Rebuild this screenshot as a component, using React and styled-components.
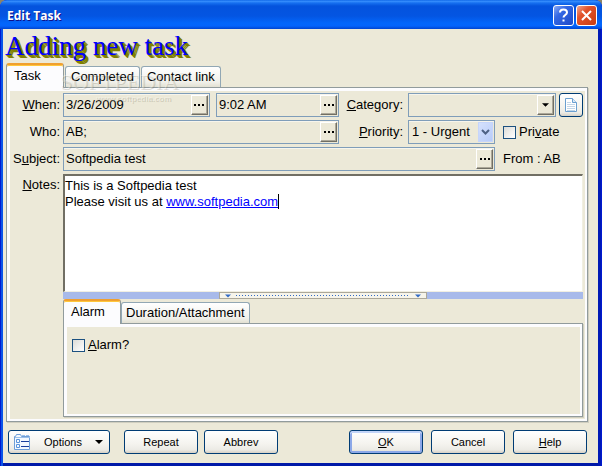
import { useState } from "react";
import styled, { createGlobalStyle, css } from "styled-components";

const GlobalStyle = createGlobalStyle`
  :root {
    --color-face: #ece9d8;
    --color-field: #7f9db9;
    --color-tab: #919b9c;
    --color-navy: #003c74;
  }
  * {
    box-sizing: border-box;
  }
  body {
    margin: 0;
    background: #8a8468;
    color: #000;
    font-family: "Liberation Sans", Arial, sans-serif;
    font-size: 13px;
    line-height: 16px;
  }
  input, select, button {
    font: inherit;
    color: inherit;
  }
`;

const Window = styled.main`
  display: flex;
  flex-direction: column;
  min-height: 100vh;
  border-radius: 7px 7px 0 0;
  overflow: hidden;
  background: var(--color-face);
  box-shadow: inset 0 0 0 1px #0019cf, inset 3px 0 #0a54e8, inset -4px 0 #0019b5,
    inset 0 -4px #0019a8;
`;

const TitleBar = styled.header`
  display: flex;
  align-items: center;
  gap: 2px;
  height: 29px;
  padding: 1px 5px 0 7px;
  background: linear-gradient(
    #0058e0 0,
    #3b93ff 1px,
    #1670f0 3px,
    #0453dd 6px,
    #0455e2 16px,
    #0366fb 23px,
    #0464fc 26px,
    #0144d0 29px
  );
`;

const WindowTitle = styled.h1`
  flex: 1;
  margin: 0;
  padding-top: 2px;
  color: #fff;
  font: bold 12px/16px "Open Sans", "Noto Sans", sans-serif;
  text-shadow: 1px 1px #0f1089;
`;

const CaptionButton = styled.button`
  display: grid;
  place-items: center;
  width: 21px;
  height: 21px;
  padding: 0;
  border: 1px solid #fff;
  border-radius: 3px;
  background: ${(props) =>
    props.$close
      ? "linear-gradient(135deg, #f0a68e, #e2532c 35%, #c93c10)"
      : "linear-gradient(135deg, #8aabf5, #3368e4 35%, #1c48c8)"};
`;

const Content = styled.div`
  display: flex;
  flex: 1;
  flex-direction: column;
  padding: 3px 14px 13px 6px;
`;

const Heading = styled.h2`
  margin: 0 0 0 -1px;
  color: #00f;
  font: 27px/28px "Liberation Serif", "Times New Roman", serif;
  text-shadow: 1px 1px #808000, 2px 2px #808000, 3px 3px #808000;
`;

const TabList = styled.div`
  position: relative;
  display: flex;
  align-items: flex-end;
  gap: ${(props) => props.$gap};
  height: 24px;
  margin-top: ${(props) => props.$top};
`;

const Tab = styled.button`
  height: 21px;
  padding: ${(props) => props.$pad};
  border: 1px solid #91a7b4;
  border-bottom: none;
  border-radius: 3px 3px 0 0;
  background: linear-gradient(#fff, #f0f0ea 75%, #e2e0d2);
  white-space: nowrap;

  ${(props) =>
    props.$active &&
    css`
      position: relative;
      height: 25px;
      width: 58px;
      margin-bottom: -1px;
      padding: 0 10px 2px 7px;
      border-color: var(--color-tab);
      border-top: 2px solid #f0a030;
      background: #fcfcfe;
      box-shadow: inset 0 1px #ffc73c;
      text-align: left;
    `}
`;

const TabPanel = styled.section`
  display: flex;
  flex: ${(props) => (props.$fill ? 1 : "none")};
  flex-direction: column;
  min-height: 94px;
  padding: ${(props) => props.$pad};
  border: 1px solid var(--color-tab);
  box-shadow: inset 3px 3px #fcfcfe, inset -2px -2px #fcfcfe, 1px 1px #d0cebf;
`;

const Watermark = styled.div`
  position: absolute;
  z-index: 1;
  left: 54px;
  top: 8px;
  color: rgba(255, 255, 255, 0.3);
  font: 22px/22px "Liberation Serif", serif;
  text-shadow: 1px 1px rgba(120, 115, 90, 0.25);
  pointer-events: none;

  small {
    font-size: 10px;
    line-height: 10px;
    vertical-align: top;
  }
`;

const WatermarkSite = styled.div`
  margin-left: 36px;
  font: bold 8px/12px "Liberation Sans", sans-serif;
`;

const Form = styled.div`
  display: grid;
  grid-template-columns: 53px 1fr 69px 87px 88px;
  grid-auto-rows: 24px;
  row-gap: 3px;
  align-items: center;
`;

const Label = styled.label`
  padding-right: ${(props) => (props.$wide ? "5px" : "3px")};
  text-align: right;
  white-space: nowrap;
`;

const Group = styled.div`
  display: flex;
  align-items: center;
  gap: ${(props) => props.$gap};
  grid-column: ${(props) => props.$span && `span ${props.$span}`};
  min-width: 0;
`;

const Field = styled.div`
  position: relative;
  display: flex;
  flex: ${(props) => props.$grow || 1} 1 0;
  min-width: 0;
  height: 24px;
  padding: 1px;
  border: 1px solid var(--color-field);
  box-shadow: inset 0 1px #f7f5ec;
`;

const TextInput = styled.input`
  flex: 1;
  min-width: 0;
  padding: 0 1px 1px;
  border: none;
  outline: none;
  background: none;
`;

const bevel = css`
  width: 17px;
  height: 20px;
  padding: 0;
  border: 1px solid;
  border-color: #fff #716f64 #716f64 #fff;
  background: var(--color-face);
  box-shadow: inset -1px -1px #aca899;
`;

const MoreButton = styled.button`
  ${bevel}
  display: grid;
  place-items: center;
`;

const Select = styled.select`
  flex: 1;
  min-width: 0;
  padding: 0 0 0 2px;
  border: none;
  outline: none;
  background: none;
  appearance: none;
`;

const DropArrow = styled.span`
  ${bevel}
  position: absolute;
  top: 1px;
  right: 1px;
  display: grid;
  place-items: center;
  pointer-events: none;

  ${(props) =>
    props.$blue &&
    css`
      width: 15px;
      border-color: #c6d5fb;
      background: linear-gradient(135deg, #d5e1fd, #b7cbf9);
      box-shadow: none;
    `}
`;

const xpButton = css`
  display: flex;
  align-items: center;
  justify-content: center;
  height: 24px;
  padding: 0;
  border: 1px solid var(--color-navy);
  border-radius: 3px;
  background: linear-gradient(#fff, #f4f3ee 60%, #ecebe5 85%, #d6d0c5);
`;

const PageButton = styled.button`
  ${xpButton}
  width: 24px;
`;

const CheckLabel = styled.label`
  display: flex;
  align-items: center;
  gap: 3px;
  padding-left: ${(props) => props.$pad};
`;

const Checkbox = styled.input`
  width: 13px;
  height: 13px;
  margin: 0;
  border: 1px solid #1c5180;
  background: linear-gradient(135deg, #dcdcd7, #fff);
  appearance: none;

  &:checked {
    box-shadow: inset 0 0 0 3px #fff;
    background: #21a121;
  }
`;

const From = styled.span`
  padding-left: 8px;
  white-space: nowrap;
`;

const NotesRow = styled.div`
  display: grid;
  flex: 1;
  grid-template-columns: 53px 1fr;
  margin-top: 3px;
`;

const NotesLabel = styled(Label)`
  padding-top: 3px;
`;

const NotesColumn = styled.div`
  display: flex;
  flex-direction: column;
  min-width: 0;
`;

const Notes = styled.div`
  flex: 1;
  min-height: 118px;
  padding: 2px 0;
  border: 2px solid;
  border-width: 2px 1px 1px 2px;
  border-color: #716f64 #f1efe2 #f1efe2 #716f64;
  outline: none;
  background: #fff;

  p {
    margin: 0;
  }
  a {
    color: #00f;
  }
`;

const Caret = styled.span`
  display: inline-block;
  width: 1px;
  height: 15px;
  background: #000;
  vertical-align: top;
`;

const Splitter = styled.div`
  display: flex;
  justify-content: center;
  height: 7px;
  background: #a8baea;
`;

const Grip = styled.div`
  display: flex;
  align-items: center;
  gap: 5px;
  width: 40%;
  padding: 0 5px;
  border: 1px solid #aca899;
  background: #f6f4ea;

  svg {
    flex: none;
  }
`;

const Dots = styled.div`
  flex: 1;
  height: 1px;
  background: repeating-linear-gradient(
    90deg,
    #316ac5 0 1px,
    transparent 1px 3px
  );
`;

const Footer = styled.footer`
  display: flex;
  justify-content: space-between;
  margin-top: 8px;
  padding: 0 1px 0 2px;
  font-size: 11px;
`;

const ButtonGroup = styled.div`
  display: flex;
  gap: ${(props) => props.$gap};
`;

const Button = styled.button`
  ${xpButton}
  width: 74px;
  box-shadow: ${(props) =>
    props.$default && "inset 0 2px #c2d4f8, inset 0 0 0 2px #8ca8e8"};
`;

const OptionsButton = styled(Button)`
  justify-content: space-between;
  width: 102px;
  margin-right: 8px;
  padding: 0 6px 0 5px;
`;

function Ellipsis() {
  return (
    <svg width="10" height="2" viewBox="0 0 10 2" shapeRendering="crispEdges">
      <path d="M0 0h2v2H0zM4 0h2v2H4zM8 0h2v2H8z" />
    </svg>
  );
}

function Triangle({ width = 7, color = "#000" }) {
  return (
    <svg width={width} height="4" viewBox="0 0 8 4">
      <path d="M0 0h8L4 4z" fill={color} />
    </svg>
  );
}

function PageIcon() {
  return (
    <svg width="14" height="16" viewBox="0 0 14 16" fill="none">
      <path d="M1.5 1.5h7l4 4v9h-11z" fill="#fff" stroke="#6a9fd0" />
      <path d="M8.5 1.5v4h4" fill="#dbe9f7" stroke="#6a9fd0" />
      <path d="M3 5.5h4M3 7.5h8M3 9.5h8M3 11.5h8M3 13.5h8" stroke="#c3d6e8" />
    </svg>
  );
}

function OptionsIcon() {
  return (
    <svg width="17" height="16" viewBox="0 0 17 16" fill="none">
      <path
        d="M.5 15.500v-13h1l1-2h4l1 2h8v13z"
        fill="#f4f9ff"
        stroke="#6f9fd8"
      />
      <path d="M8 1.500h3M12 1.500h3M1 3.500h15" stroke="#9cc0ea" />
      <path d="M2.5 5.500h3v3h-3zM2.5 10.500h3v3h-3z" stroke="#5a94da" />
      <path d="M7 7.500h8M7 12.500h8" stroke="#1a3f9c" />
    </svg>
  );
}

function PickField({ id, label, value, grow }) {
  return (
    <Field $grow={grow}>
      <TextInput id={id} aria-label={label} defaultValue={value} />
      <MoreButton type="button" aria-label={`Choose ${label}`}>
        <Ellipsis />
      </MoreButton>
    </Field>
  );
}

function App() {
  const [tab, setTab] = useState("Task");
  const [subTab, setSubTab] = useState("Alarm");

  return (
    <>
      <GlobalStyle />
      <Window>
        <TitleBar>
          <WindowTitle>Edit Task</WindowTitle>
          <CaptionButton aria-label="Help">
            <svg width="13" height="15" viewBox="0 0 13 15" fill="none">
              <path
                d="M3 4.5C3 2.500 4.500 1.500 6.500 1.500s3.500 1 3.500 3c0 2.500-3.500 2.500-3.500 5"
                stroke="#fff"
                strokeWidth="2"
              />
              <path d="M5.500 11.500h2v2h-2z" fill="#fff" />
            </svg>
          </CaptionButton>
          <CaptionButton $close aria-label="Close">
            <svg width="13" height="13" viewBox="0 0 13 13">
              <path d="M2 2l9 9M11 2l-9 9" stroke="#fff" strokeWidth="2" />
            </svg>
          </CaptionButton>
        </TitleBar>

        <Content>
          <Heading>Adding new task</Heading>
          <TabList role="tablist" $top="3px" $gap="1px">
            {["Task", "Completed", "Contact link"].map((name) => (
              <Tab
                key={name}
                role="tab"
                aria-selected={tab === name}
                $active={tab === name}
                $pad="0 5px"
                onClick={() => setTab(name)}
              >
                {name}
              </Tab>
            ))}
            <Watermark aria-hidden="true">
              SOFTPEDIA<small>™</small>
              <WatermarkSite>www.softpedia.com</WatermarkSite>
            </Watermark>
          </TabList>

          <TabPanel role="tabpanel" $fill $pad="5px 4px 4px 3px">
            <Form>
              <Label htmlFor="date">
                <u>W</u>hen:
              </Label>
              <Group $gap="6px">
                <PickField id="date" label="date" value="3/26/2009" grow={6} />
                <PickField id="time" label="time" value="9:02 AM" grow={5} />
              </Group>
              <Label htmlFor="category" $wide>
                <u>C</u>ategory:
              </Label>
              <Group $span={2} $gap="3px">
                <Field>
                  <Select id="category">
                    <option></option>
                  </Select>
                  <DropArrow>
                    <Triangle />
                  </DropArrow>
                </Field>
                <PageButton type="button" aria-label="New category">
                  <PageIcon />
                </PageButton>
              </Group>

              <Label htmlFor="who">Who:</Label>
              <Group>
                <PickField id="who" label="who" value="AB;" />
              </Group>
              <Label htmlFor="priority" $wide>
                <u>P</u>riority:
              </Label>
              <Field>
                <Select id="priority">
                  <option>1 - Urgent</option>
                </Select>
                <DropArrow $blue>
                  <svg width="9" height="7" viewBox="0 0 9 7" fill="none">
                    <path
                      d="M1 1l3.500 3.500L8 1"
                      stroke="#4d6185"
                      strokeWidth="2"
                    />
                  </svg>
                </DropArrow>
              </Field>
              <CheckLabel $pad="8px">
                <Checkbox type="checkbox" />
                <span>
                  Pri<u>v</u>ate
                </span>
              </CheckLabel>

              <Label htmlFor="subject">
                S<u>u</u>bject:
              </Label>
              <Group $span={3}>
                <PickField
                  id="subject"
                  label="subject"
                  value="Softpedia test"
                />
              </Group>
              <From>From : AB</From>
            </Form>

            <NotesRow>
              <NotesLabel as="span" id="notes-label">
                <u>N</u>otes:
              </NotesLabel>
              <NotesColumn>
                <Notes
                  role="textbox"
                  aria-multiline="true"
                  aria-labelledby="notes-label"
                  contentEditable
                  suppressContentEditableWarning
                >
                  <p>This is a Softpedia test</p>
                  <p>
                    Please visit us at{" "}
                    <a href="http://www.softpedia.com">www.softpedia.com</a>
                    <Caret />
                  </p>
                </Notes>
                <Splitter>
                  <Grip>
                    <Triangle width={6} color="#316ac5" />
                    <Dots />
                    <Triangle width={6} color="#316ac5" />
                  </Grip>
                </Splitter>

                <TabList role="tablist" $top="0" $gap="0">
                  {["Alarm", "Duration/Attachment"].map((name) => (
                    <Tab
                      key={name}
                      role="tab"
                      aria-selected={subTab === name}
                      $active={subTab === name}
                      $pad="0 4px"
                      onClick={() => setSubTab(name)}
                    >
                      {name}
                    </Tab>
                  ))}
                </TabList>
                <TabPanel role="tabpanel" $pad="13px 8px">
                  <CheckLabel>
                    <Checkbox type="checkbox" />
                    <span>
                      <u>A</u>larm?
                    </span>
                  </CheckLabel>
                </TabPanel>
              </NotesColumn>
            </NotesRow>
          </TabPanel>

          <Footer>
            <ButtonGroup $gap="6px">
              <OptionsButton>
                <OptionsIcon />
                Options
                <Triangle width={8} />
              </OptionsButton>
              <Button>Repeat</Button>
              <Button>Abbrev</Button>
            </ButtonGroup>
            <ButtonGroup $gap="8px">
              <Button $default>
                <span>
                  <u>O</u>K
                </span>
              </Button>
              <Button>Cancel</Button>
              <Button>
                <span>
                  <u>H</u>elp
                </span>
              </Button>
            </ButtonGroup>
          </Footer>
        </Content>
      </Window>
    </>
  );
}

export default App;
